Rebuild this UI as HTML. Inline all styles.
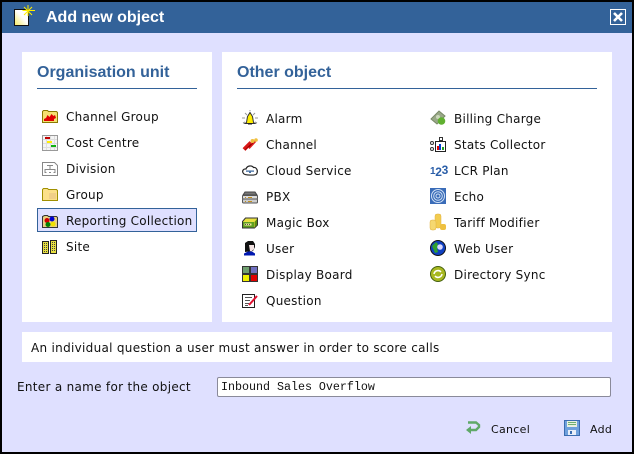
<!DOCTYPE html>
<html><head><meta charset="utf-8"><style>
html,body{margin:0;padding:0}
body{width:634px;height:454px;position:relative;overflow:hidden;background:#dfe0ff;font-family:"DejaVu Sans","Liberation Sans",sans-serif;font-size:12px;color:#111}
.a{position:absolute}
.t{position:absolute;white-space:nowrap;line-height:16px;height:16px;letter-spacing:.25px}
svg{position:absolute;width:16px;height:16px;overflow:visible}
h2{position:absolute;margin:0;font-weight:bold;color:#336299;white-space:nowrap;line-height:20px;font-family:"Liberation Sans",sans-serif;font-size:16px}
</style></head><body>
<div class="a" style="left:0;top:0;width:634px;height:2px;background:#000"></div>
<div class="a" style="left:0;top:452px;width:634px;height:2px;background:#000"></div>
<div class="a" style="left:0;top:0;width:2px;height:454px;background:#000"></div>
<div class="a" style="left:632px;top:0;width:2px;height:454px;background:#000"></div>
<div class="a" style="left:2px;top:2px;width:630px;height:31px;background:#336299"></div>
<svg style="left:14px;top:5px;width:22px;height:22px" viewBox="0 0 22 22"><defs><linearGradient id="g" x1="1" y1="0" x2="0" y2="1"><stop offset=".45" stop-color="#fff"/><stop offset="1" stop-color="#f4ea60"/></linearGradient></defs><rect x=".5" y="4.500" width="14" height="16" fill="url(#g)" stroke="#111"/><path d="M14 0v11M8.500 5.500h12.500M10 2l8 8M18 2l-8 8" stroke="#ffee00" fill="none"/></svg>
<div class="t" style="left:46px;top:8px;color:#fff;font-weight:bold;font-size:16px;line-height:20px;height:20px;font-family:'Liberation Sans',sans-serif;letter-spacing:0">Add new object</div>
<div class="a" style="left:610px;top:9px;width:14px;height:14px;border:1px solid #fff"></div>
<svg style="left:613px;top:12px;width:10px;height:10px" viewBox="0 0 10 10"><path d="M1 1l8 8M9 1l-8 8" stroke="#fff" stroke-width="2.600" fill="none"/></svg>

<div class="a" style="left:22px;top:52px;width:190px;height:270px;background:#fff"></div>
<div class="a" style="left:222px;top:52px;width:390px;height:270px;background:#fff"></div>
<div class="a" style="left:22px;top:332px;width:590px;height:30px;background:#fff"></div>

<h2 style="left:37px;top:63px">Organisation unit</h2>
<div class="a" style="left:37px;top:88px;width:160px;height:1px;background:#336299"></div>
<h2 style="left:237px;top:63px">Other object</h2>
<div class="a" style="left:237px;top:88px;width:360px;height:1px;background:#336299"></div>

<div class="a" style="left:37px;top:208px;width:158px;height:22px;background:#dfe0ff;border:1px solid #336299"></div>

<!-- left list -->
<svg style="left:42px;top:109px" viewBox="0 0 16 16"><path d="M.5 13.500v-11l1-1h4l1 1h8l1 1v10z" fill="#f5e070" stroke="#8a7a00"/><path d="M2 12v-2l2-1 1.500-3 2 2 2-3 2 2 1.500-1 1 3-2 1v2z" fill="#e00000"/></svg>
<div class="t" style="left:66px;top:109px">Channel Group</div>
<svg style="left:42px;top:135px" viewBox="0 0 16 16"><rect x=".5" y=".5" width="15" height="15" fill="#f4f4f4" stroke="#999"/><path d="M1 4.500h14M1 8.500h14M1 12.500h14M4.500 1v14M8.500 1v14M12.500 1v14" stroke="#ddd"/><rect x="3" y="2" width="5" height="2" fill="#c00000"/><rect x="5" y="6" width="5" height="2" fill="#ffee00"/><rect x="9" y="10" width="5" height="2" fill="#10b010"/></svg>
<div class="t" style="left:66px;top:135px">Cost Centre</div>
<svg style="left:42px;top:161px" viewBox="0 0 16 16"><path d="M.5 1.500h12l3 3v10H.5z" fill="#fff" stroke="#888"/><path d="M3 11V8.500h10V11M8 8.500V5M5 4.500h6M2.500 11.500h2M7 11.500h2M11.500 11.500h2" fill="none" stroke="#888"/></svg>
<div class="t" style="left:66px;top:161px">Division</div>
<svg style="left:42px;top:187px" viewBox="0 0 16 16"><path d="M.5 13.500v-11l1-1h4l1 1h8l1 1v10z" fill="#fbe08a" stroke="#a09000"/><rect x="7" y="6" width="7" height="6" fill="#f0cf88"/></svg>
<div class="t" style="left:66px;top:187px">Group</div>
<svg style="left:42px;top:213px" viewBox="0 0 16 16"><path d="M.5 14.500v-11l2-1h3l1 1h8l1 1v10z" fill="#e8cf80" stroke="#333"/><circle cx="5" cy="7.500" r="2.500" fill="#d00000"/><circle cx="10" cy="6" r="2.500" fill="#0000d0"/><circle cx="6" cy="11.500" r="2.500" fill="#008000"/><circle cx="11" cy="11" r="2.500" fill="#f0e000"/></svg>
<div class="t" style="left:66px;top:213px">Reporting Collection</div>
<svg style="left:42px;top:239px" viewBox="0 0 16 16"><rect x=".5" y="2.500" width="6" height="12" fill="#e8e040" stroke="#222"/><rect x="8.500" y="1.500" width="6" height="13" fill="#e8e040" stroke="#222"/><path d="M2.500 4v9M4.500 4v9M10.500 3v10M12.500 3v10" stroke="#444" stroke-dasharray="1 1"/></svg>
<div class="t" style="left:66px;top:239px">Site</div>

<!-- middle list -->
<svg style="left:242px;top:110px" viewBox="0 0 16 16"><path d="M4.500 12.500l1-6 2.500-4 2.500 4 1 6 1.500 1h-10z" fill="#ffee00" stroke="#333"/><rect x="6" y="13" width="4" height="1.500" fill="#222"/><path d="M0 8h3M13 8h3M3 3l2 2M13 3l-2 2M8 0v1M1 13l2-1M15 13l-2-1" stroke="#999"/></svg>
<div class="t" style="left:266px;top:111px">Alarm</div>
<svg style="left:242px;top:136px" viewBox="0 0 16 16"><path d="M2 13.500L9 6.500" stroke="#d81818" stroke-width="4"/><path d="M6.500 12L13 5" stroke="#e02020" stroke-width="3"/><path d="M3 14L9 8M7 11l5-5" stroke="#900" stroke-width=".8"/><circle cx="10.500" cy="5" r="2" fill="#f0c040"/><circle cx="14" cy="4" r="1.800" fill="#f0c040"/></svg>
<div class="t" style="left:266px;top:137px">Channel</div>
<svg style="left:242px;top:162px" viewBox="0 0 16 16"><path d="M1.500 11.500C-.5 9 1.500 6.500 4 7c1-3.500 6-4 7.500-1.500C14.500 5 16.500 9 14.500 12c-.8 1.500-12 1.500-13-.5z" fill="#fff" stroke="#222" stroke-width="1.200"/><rect x="4" y="8.500" width="8" height="1.200" fill="#336299"/><rect x="7" y="9.700" width="2" height="1.200" fill="#336299"/></svg>
<div class="t" style="left:266px;top:163px">Cloud Service</div>
<svg style="left:242px;top:188px" viewBox="0 0 16 16"><path d="M1 7l2-3h10l2 3z" fill="#777" stroke="#444"/><rect x=".5" y="7.500" width="15" height="3.500" rx="1" fill="#ddd" stroke="#555"/><rect x=".5" y="11" width="15" height="4" rx="1" fill="#ccc" stroke="#555"/><path d="M3 9.500h1M6 9.500h4M3 13.500h1M6 13.500h4" stroke="#c09020"/></svg>
<div class="t" style="left:266px;top:189px">PBX</div>
<svg style="left:242px;top:214px" viewBox="0 0 16 16"><path d="M.5 7.500l3-3.500h12v7l-3 3H.5z" fill="#e8e040" stroke="#333"/><rect x="1" y="8" width="11" height="5.500" fill="#60a020"/><rect x="2.500" y="9.500" width="7" height="2" fill="#f0e8a0"/><path d="M3.500 10v1M5.500 10v1M7.500 10v1" stroke="#554"/><path d="M12.500 8l2.500-3v6l-2.500 2.500z" fill="#5a8a10"/></svg>
<div class="t" style="left:266px;top:215px">Magic Box</div>
<svg style="left:242px;top:240px" viewBox="0 0 16 16"><path d="M3 12V3l3-2h5l2 3v3l-2 4z" fill="#111"/><path d="M7 5h5v4l-2 2H8z" fill="#f4e4e4"/><path d="M2 15.500v-2l4-2h4l3 2v2z" fill="#0018b0"/></svg>
<div class="t" style="left:266px;top:241px">User</div>
<svg style="left:242px;top:266px" viewBox="0 0 16 16"><rect width="16" height="16" fill="#333"/><rect x="1" y="1" width="6" height="6" fill="#70a070"/><rect x="9" y="1" width="6" height="6" fill="#7070c0"/><rect x="1" y="9" width="6" height="6" fill="#f0f000"/><rect x="9" y="9" width="6" height="6" fill="#e00000"/></svg>
<div class="t" style="left:266px;top:267px">Display Board</div>
<svg style="left:242px;top:293px" viewBox="0 0 16 16"><rect x=".5" y="1.500" width="12" height="13" fill="#fff" stroke="#222"/><path d="M3 4.500h7M3 7.500h5M3 10.500h4M3 12.500h3" stroke="#555"/><path d="M7 12L15 3" stroke="#e01030" stroke-width="2"/></svg>
<div class="t" style="left:266px;top:293px">Question</div>

<!-- right list -->
<svg style="left:430px;top:110px" viewBox="0 0 16 16"><path d="M1 9l8-8 6 5-8 8z" fill="#99a888" stroke="#778866"/><circle cx="8" cy="7" r="2" fill="#ccd8bb"/><circle cx="11.500" cy="11" r="3.800" fill="#60b030"/></svg>
<div class="t" style="left:454px;top:111px">Billing Charge</div>
<svg style="left:430px;top:136px" viewBox="0 0 16 16"><rect x="5.500" y="5.500" width="10" height="10" fill="#fff" stroke="#222"/><rect x="7" y="10" width="2" height="4" fill="#e00000"/><rect x="9" y="8" width="2" height="6" fill="#0040d0"/><rect x="12" y="11" width="2" height="3" fill="#20a020"/><rect x="9.500" y="1.500" width="3" height="3" fill="none" stroke="#333"/><circle cx="2" cy="7" r="1.500" fill="none" stroke="#333"/><circle cx="2" cy="13" r="1.500" fill="none" stroke="#333"/></svg>
<div class="t" style="left:454px;top:137px">Stats Collector</div>
<div class="t" style="left:430px;top:162px;width:18px;color:#2a5ea8;font-weight:bold;font-family:'Liberation Sans',sans-serif;font-size:12px;letter-spacing:-.3px"><span style="font-size:10px">1</span><span style="position:relative;top:2px">2</span>3</div>
<div class="t" style="left:454px;top:163px">LCR Plan</div>
<svg style="left:430px;top:188px" viewBox="0 0 16 16"><rect width="16" height="16" fill="#3a6cb8"/><g fill="none" stroke="#cfe0f5"><circle cx="8" cy="8" r="6.500"/><circle cx="8" cy="8" r="4.300"/><circle cx="8" cy="8" r="2"/></g></svg>
<div class="t" style="left:454px;top:189px">Echo</div>
<svg style="left:430px;top:214px" viewBox="0 0 16 16"><rect x="5" y="0" width="6" height="14" rx="2" fill="#f2cc50" stroke="#e0b040" stroke-width=".5"/><rect x="0" y="6" width="6" height="10" rx="2" fill="#f5d870" stroke="#e0b040" stroke-width=".5"/><rect x="10" y="10" width="6" height="6" rx="2" fill="#eec040"/></svg>
<div class="t" style="left:454px;top:215px">Tariff Modifier</div>
<svg style="left:430px;top:240px" viewBox="0 0 16 16"><circle cx="8" cy="8" r="7.500" fill="#1040c0" stroke="#111"/><path d="M2 6l4-4 2 2-1 4 1 4-3 1z" fill="#30a030"/><circle cx="10" cy="7" r="2.800" fill="#d8d8ff"/></svg>
<div class="t" style="left:454px;top:241px">Web User</div>
<svg style="left:430px;top:266px" viewBox="0 0 16 16"><circle cx="8" cy="8" r="7.500" fill="#a8b820" stroke="#446010"/><path d="M4 8a4 4 0 0 1 7-2M12 8a4 4 0 0 1-7 2" fill="none" stroke="#fff" stroke-width="1.500"/></svg>
<div class="t" style="left:454px;top:267px">Directory Sync</div>

<div class="t" style="left:31px;top:340px;letter-spacing:.3px">An individual question a user must answer in order to score calls</div>
<div class="t" style="left:17px;top:379px;letter-spacing:.3px">Enter a name for the object</div>
<div class="a" style="left:217px;top:377px;width:392px;height:18px;background:#fff;border:1px solid #8a8a9a;border-radius:2px"></div>
<div class="t" style="left:221px;top:379px;font-family:'Liberation Mono',monospace;font-size:11.67px;letter-spacing:0;color:#111">Inbound Sales Overflow</div>

<svg style="left:465px;top:420px" viewBox="0 0 16 16"><path d="M3 2.500h8l3 2.500v2l-3 3H5" fill="none" stroke="#5fa868" stroke-width="2.400"/><path d="M1 10l5-4v8z" fill="#5fa868"/></svg>
<div class="t" style="left:491px;top:422px;font-size:11px;letter-spacing:.3px">Cancel</div>
<svg style="left:564px;top:420px" viewBox="0 0 16 16"><rect x=".5" y=".5" width="15" height="15" fill="#6ea0dc" stroke="#3a6cb0"/><rect x="3" y="1" width="10" height="6" fill="#e8f0e0"/><path d="M4 2.500h8M4 4.500h8" stroke="#70b070"/><rect x="4" y="10" width="8" height="5" fill="#e8eef8"/><rect x="6" y="11" width="2" height="3" fill="#3a6cb0"/></svg>
<div class="t" style="left:590px;top:422px;font-size:11px;letter-spacing:.3px">Add</div>
</body></html>
